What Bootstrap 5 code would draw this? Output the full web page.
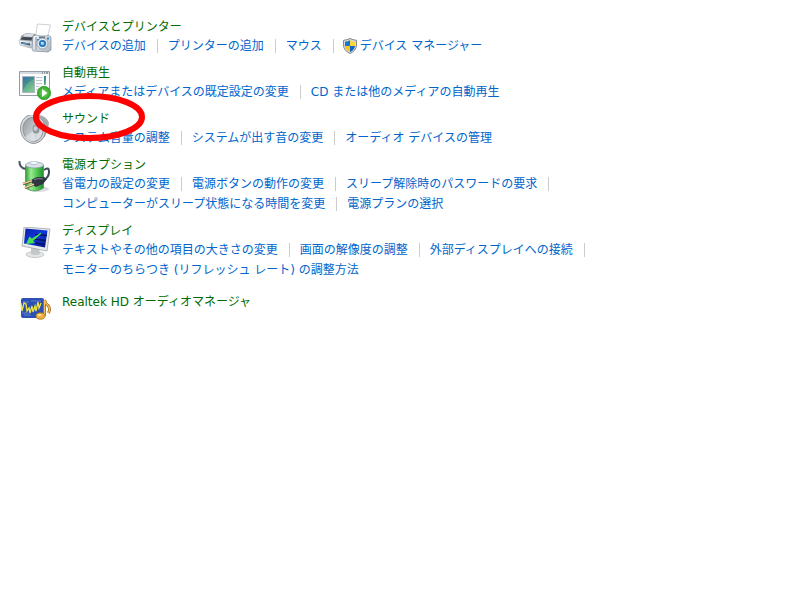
<!DOCTYPE html>
<html lang="ja">
<head>
<meta charset="utf-8">
<meta name="viewport" content="width=device-width, initial-scale=1">
<title>ハードウェアとサウンド</title>
<link href="https://cdn.jsdelivr.net/npm/bootstrap@5.3.0/dist/css/bootstrap.min.css" rel="stylesheet">
<style>
  body { font: 12px/20px "DejaVu Sans", "Noto Sans CJK JP", sans-serif; background: #fff; }
  .panel { padding: 18px; }
  .entry { gap: 10px; margin-bottom: 8px; }
  .entry-icon { width: 34px; height: 34px; margin: 5px 0 -5px; }
  .entry h2 { font-size: 12px; line-height: 18px; }
  .entry h2 a { color: #006b00; }
  .tasks a { color: #0066cc; }
  .tasks li { height: 20px; }
  .tasks li:not(:last-child)::after { content: ""; width: 1px; height: 14px; margin: 0 10px 0 11px; background: #ccc; }
  .shield { width: 16px; height: 16px; margin: 0 2px 0 -2px; }
  .entry-last { margin-top: 13px; }
  .entry-last .entry-icon { margin: 0; }
  .ring { left: 14px; top: -18px; width: 114px; height: 50px; pointer-events: none; z-index: 1; }
</style>
</head>
<body>
<main class="panel">
  <section class="entry d-flex">
    <svg class="entry-icon flex-shrink-0" viewBox="0 0 34 34" aria-hidden="true">
      <defs>
        <linearGradient id="silver" x2="1" y2="1"><stop stop-color="#fdfdfd"/><stop offset="1" stop-color="#aab3bc"/></linearGradient>
      </defs>
      <path d="M3 13l5-3 10 1v9l-6 4-10-5z" fill="#8d969e"/>
      <path d="M7 10.500l9 .5-2 3-9-.5z" fill="#d9e0e5"/>
      <path d="M5 14l10 .5-2 3-11-1z" fill="#3f4850"/>
      <path d="M1 17l12 1 2 1v5l-3 1-10-3z" fill="url(#silver)" stroke="#9ba3aa" stroke-width=".5"/>
      <path d="M3 19l9 1.500v2L3 20.500z" fill="#3a434c"/>
      <path d="M4 19.500l7 1v1l-7-1z" fill="#4e9cd0"/>
      <path d="M19.500 1l13 1-3 12-12-1z" fill="#fff" stroke="#b9bdc2" stroke-width=".7"/>
      <path d="M15 13l3-1 4 1h7l1-1 3 2v13l-3 2-15-1-1-2z" fill="url(#silver)" stroke="#7f8c99" stroke-width=".7"/>
      <path d="M17 14l2 0v13h-2z" fill="#b0bac3"/>
      <path d="M21 13.500h6v2h-6z" fill="#667482"/>
      <circle cx="24.500" cy="20.500" r="5.500" fill="#e4ebf1" stroke="#8593a1" stroke-width=".8"/>
      <circle cx="24.500" cy="20.500" r="3.600" fill="#2874b8"/>
      <circle cx="24.500" cy="20.500" r="1.800" fill="#7ed0f0"/>
      <circle cx="23.800" cy="19.700" r=".8" fill="#fff"/>
      <path d="M29 14.500h2v2h-2zM19 16h2v1.500h-2z" fill="#2c89d0"/>
    </svg>
    <div>
      <h2 class="m-0 fw-normal"><a href="#" class="text-decoration-none">デバイスとプリンター</a></h2>
      <ul class="tasks list-unstyled d-flex flex-wrap m-0">
        <li class="d-flex align-items-center"><a href="#" class="text-decoration-none">デバイスの追加</a></li>
        <li class="d-flex align-items-center"><a href="#" class="text-decoration-none">プリンターの追加</a></li>
        <li class="d-flex align-items-center"><a href="#" class="text-decoration-none">マウス</a></li>
        <li class="d-flex align-items-center">
          <svg class="shield" viewBox="0 0 16 16" aria-hidden="true">
            <path d="M8 .5Q11 2 14.500 2.300V7q0 5.500-6.500 8.500Q1.500 12.500 1.500 7V2.300Q5 2 8 .500z" fill="#d9dcde" stroke="#80878d"/>
            <path d="M8 2.200V8H3V3.800Q6 3.400 8 2.200z" fill="#1b74cf"/>
            <path d="M8 2.200V8h5V3.800Q10 3.400 8 2.200z" fill="#fbd638"/>
            <path d="M3 8h5v6Q3.500 12 3 8z" fill="#f5c526"/>
            <path d="M13 8H8v6q4.500-2 5-6z" fill="#1565c0"/>
          </svg>
          <a href="#" class="text-decoration-none">デバイス マネージャー</a>
        </li>
      </ul>
    </div>
  </section>

  <section class="entry d-flex">
    <svg class="entry-icon flex-shrink-0" viewBox="0 0 34 34" aria-hidden="true">
      <defs>
        <linearGradient id="media" x2=".6" y2="1"><stop stop-color="#3a6fb5"/><stop offset=".5" stop-color="#3f9088"/><stop offset="1" stop-color="#7cc087"/></linearGradient>
        <radialGradient id="play"><stop stop-color="#7bdc5a"/><stop offset="1" stop-color="#2fa42c"/></radialGradient>
      </defs>
      <path d="M1.500 2.500h30v24h-30z" fill="#fbfbfb" stroke="#969da4"/>
      <path d="M2 3h29v2H2z" fill="#d3dae1"/>
      <path d="M24 3.500h1v1h-1zM26 3.500h1v1h-1zM28 3.500h2v1h-2z" fill="#53606c"/>
      <path d="M4.500 7.500h12v16h-12z" fill="url(#media)" stroke="#a9b6bf"/>
      <path d="M5 22Q8 13 16 10v13H5z" fill="#8ad39a" opacity=".35"/>
      <path d="M18 8.500h6M18 11.500h6M18 14.500h6M18 17.500h3M18 20.500h2" stroke="#c3c7ca"/>
      <path d="M26 7h2v9h-2z" fill="url(#media)"/>
      <circle cx="26" cy="24" r="6.700" fill="url(#play)" stroke="#2c9a2c" stroke-width=".7"/>
      <path d="M24 20l5.500 4-5.500 4z" fill="#fff"/>
    </svg>
    <div>
      <h2 class="m-0 fw-normal"><a href="#" class="text-decoration-none">自動再生</a></h2>
      <ul class="tasks list-unstyled d-flex flex-wrap m-0">
        <li class="d-flex align-items-center"><a href="#" class="text-decoration-none">メディアまたはデバイスの既定設定の変更</a></li>
        <li class="d-flex align-items-center"><a href="#" class="text-decoration-none">CD または他のメディアの自動再生</a></li>
      </ul>
    </div>
  </section>

  <section class="entry d-flex position-relative">
    <svg class="entry-icon flex-shrink-0" viewBox="0 0 34 34" aria-hidden="true">
      <defs>
        <linearGradient id="cone" x2="1" y2="1"><stop stop-color="#8f969b"/><stop offset=".6" stop-color="#c9d0d6"/><stop offset="1" stop-color="#eceeef"/></linearGradient>
      </defs>
      <path d="M16 0q12-1 15 8-1 15-12 20l-5 1z" fill="#a6aaad"/>
      <ellipse cx="15" cy="14" rx="12.500" ry="14.500" transform="rotate(-10 15 14)" fill="#d5d8da" stroke="#85898c" stroke-width=".8"/>
      <ellipse cx="15" cy="14.500" rx="10" ry="12" transform="rotate(-10 15 14.500)" fill="url(#cone)" stroke="#8b9094" stroke-width=".9"/>
      <path d="M16 15L7 22q4 6 10 4z" fill="#e6eaed" opacity=".6"/>
      <ellipse cx="18" cy="14" rx="3.500" ry="4.500" fill="#8e959a"/>
      <ellipse cx="17.500" cy="13.500" rx="2" ry="2.500" fill="#c5cbd0"/>
    </svg>
    <div>
      <h2 class="m-0 fw-normal"><a href="#" class="text-decoration-none">サウンド</a></h2>
      <ul class="tasks list-unstyled d-flex flex-wrap m-0">
        <li class="d-flex align-items-center"><a href="#" class="text-decoration-none">システム音量の調整</a></li>
        <li class="d-flex align-items-center"><a href="#" class="text-decoration-none">システムが出す音の変更</a></li>
        <li class="d-flex align-items-center"><a href="#" class="text-decoration-none">オーディオ デバイスの管理</a></li>
      </ul>
    </div>
    <svg class="ring position-absolute" viewBox="0 0 114 50" aria-hidden="true">
      <ellipse cx="57" cy="25" rx="53" ry="21" fill="none" stroke="#f00" stroke-width="6"/>
    </svg>
  </section>

  <section class="entry d-flex">
    <svg class="entry-icon flex-shrink-0" viewBox="0 0 34 34" aria-hidden="true">
      <defs>
        <linearGradient id="cell"><stop stop-color="#2f9c38"/><stop offset=".3" stop-color="#9bea90"/><stop offset=".6" stop-color="#58cc58"/><stop offset="1" stop-color="#239030"/></linearGradient>
      </defs>
      <ellipse cx="20" cy="28" rx="11" ry="3" fill="#d9dcde"/>
      <path d="M1.500 0Q1 7 8 8" fill="none" stroke="#4a5764" stroke-width="2"/>
      <path d="M7.500 4v23q9 6 18 0V4z" fill="url(#cell)" stroke="#398242" stroke-width=".6"/>
      <ellipse cx="16.500" cy="4" rx="9" ry="3" fill="#d7e1e7" stroke="#8a9aa3" stroke-width=".7"/>
      <ellipse cx="16" cy="1.800" rx="4" ry="1.800" fill="#f3f9fc" stroke="#91a9b8" stroke-width=".6"/>
      <path d="M26 9q5-4 5 2 0 5-5 8" fill="none" stroke="#3e4857" stroke-width="2"/>
      <path d="M13 19l6-3 7 0 3 2-4 5-7 3-3-2z" fill="#303640"/>
      <path d="M16 19l4-1.500 5 .5" fill="none" stroke="#78838f"/>
      <path d="M5 23l9-3M7 27l9-3.500" stroke="#6b5330" stroke-width="2.400"/>
      <path d="M5 22.700l9-3M7 26.700l9-3.500" stroke="#f2dba2" stroke-width="1.300"/>
    </svg>
    <div>
      <h2 class="m-0 fw-normal"><a href="#" class="text-decoration-none">電源オプション</a></h2>
      <ul class="tasks list-unstyled d-flex flex-wrap m-0">
        <li class="d-flex align-items-center"><a href="#" class="text-decoration-none">省電力の設定の変更</a></li>
        <li class="d-flex align-items-center"><a href="#" class="text-decoration-none">電源ボタンの動作の変更</a></li>
        <li class="d-flex align-items-center"><a href="#" class="text-decoration-none">スリープ解除時のパスワードの要求</a></li>
        <li class="d-flex align-items-center"><a href="#" class="text-decoration-none">コンピューターがスリープ状態になる時間を変更</a></li>
        <li class="d-flex align-items-center"><a href="#" class="text-decoration-none">電源プランの選択</a></li>
      </ul>
    </div>
  </section>

  <section class="entry d-flex">
    <svg class="entry-icon flex-shrink-0" viewBox="0 0 34 34" aria-hidden="true">
      <defs>
        <linearGradient id="screen" x2="1" y2="1"><stop stop-color="#0a1fa0"/><stop offset=".5" stop-color="#1238e0"/><stop offset="1" stop-color="#04147a"/></linearGradient>
      </defs>
      <ellipse cx="17" cy="27.500" rx="9" ry="3" fill="#e3e5e7" stroke="#b2b7ba" stroke-width=".7"/>
      <path d="M13 21h8l1 6q-5 2-9 0z" fill="#c3c7ca"/>
      <path d="M6 0l26 2-3 22-25-5z" fill="#e8eaec" stroke="#a0a6aa" stroke-width=".8"/>
      <path d="M7.500 1.500l22 2-2.500 17-21-4z" fill="url(#screen)"/>
      <path d="M17 7.500l12 1M14 12l14 1.500M17 16l10 1.500" stroke="#071063" stroke-width="1.500"/>
      <path d="M23 5.500l-9 6-2.500-2L8 17l9-1-2-2 8-7z" fill="#46e052"/>
    </svg>
    <div>
      <h2 class="m-0 fw-normal"><a href="#" class="text-decoration-none">ディスプレイ</a></h2>
      <ul class="tasks list-unstyled d-flex flex-wrap m-0">
        <li class="d-flex align-items-center"><a href="#" class="text-decoration-none">テキストやその他の項目の大きさの変更</a></li>
        <li class="d-flex align-items-center"><a href="#" class="text-decoration-none">画面の解像度の調整</a></li>
        <li class="d-flex align-items-center"><a href="#" class="text-decoration-none">外部ディスプレイへの接続</a></li>
        <li class="d-flex align-items-center"><a href="#" class="text-decoration-none">モニターのちらつき (リフレッシュ レート) の調整方法</a></li>
      </ul>
    </div>
  </section>

  <section class="entry entry-last d-flex">
    <svg class="entry-icon flex-shrink-0" viewBox="0 0 34 34" aria-hidden="true">
      <rect x="3" y="5" width="23" height="20" rx="2" fill="#2d50b5"/>
      <path d="M5 9h6M13 8h10M4 20h6M6 22h7" stroke="#6f8cd6" stroke-width=".8"/>
      <path d="M3 10l1 8 2-8 2 1 1 7 2-3 1 5 2-7 1 6 2-6 1 5 2-9 1 6 2-5" fill="none" stroke="#ede53c" stroke-width="1.300"/>
      <path d="M26.500 23V7q1 4 4 6 2 3 0 7" fill="none" stroke="#8d5c10" stroke-width="2.800"/>
      <path d="M26.500 23V7q1 4 4 6 2 3 0 7" fill="none" stroke="#f6bd55" stroke-width="1.500"/>
      <ellipse cx="22.500" cy="23" rx="4.500" ry="3.200" fill="#f0b23a" stroke="#a06c1c" stroke-width=".8"/>
      <ellipse cx="21.500" cy="22" rx="2" ry="1" fill="#ffe7a0"/>
    </svg>
    <div>
      <h2 class="m-0 fw-normal"><a href="#" class="text-decoration-none">Realtek HD オーディオマネージャ</a></h2>
    </div>
  </section>
</main>
<script src="https://cdn.jsdelivr.net/npm/bootstrap@5.3.0/dist/js/bootstrap.bundle.min.js"></script>
</body>
</html>
